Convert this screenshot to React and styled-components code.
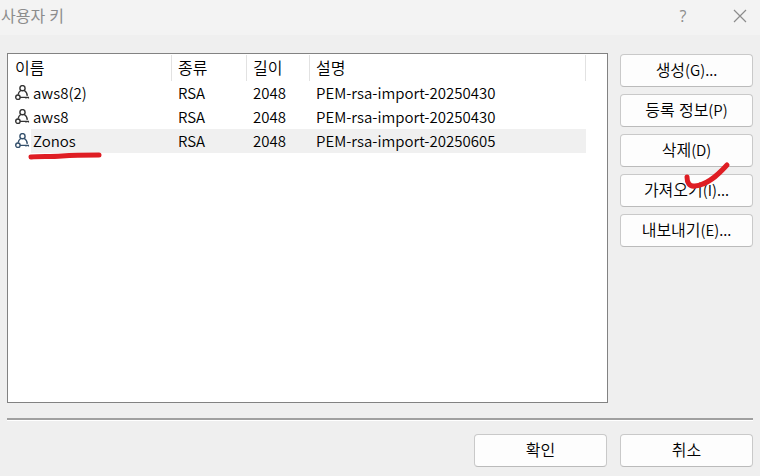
import React, { useState } from 'react'
import styled, { createGlobalStyle, css } from 'styled-components'

const keys = [
  { name: 'aws8(2)', type: 'RSA', length: 2048, description: 'PEM-rsa-import-20250430' },
  { name: 'aws8', type: 'RSA', length: 2048, description: 'PEM-rsa-import-20250430' },
  { name: 'Zonos', type: 'RSA', length: 2048, description: 'PEM-rsa-import-20250605', marked: true },
]

const actions = [
  { label: '생성', hint: '(G)...' },
  { label: '등록 정보', hint: '(P)' },
  { label: '삭제', hint: '(D)' },
  { label: '가져오기', hint: '(I)...', marked: true },
  { label: '내보내기', hint: '(E)...' },
]

const UserKeyIcon = ({ active }) => (
  <KeySvg viewBox="0 0 15 16" $active={active} aria-hidden="true">
    <circle cx="7.5" cy="3.2" r="2.6" />
    <path d="M5.7 5.5C4.2 6.5 3.4 8 3.1 9.6M9.3 5.5c1.9 1.1 2.9 3 3 5.4" />
    <circle cx="2.9" cy="12.2" r="2.2" />
    <path d="M5 12.4H14M11 12.6v1M13.4 12.6v1" />
  </KeySvg>
)

const App = () => {
  const [selected, setSelected] = useState(2)

  return (
    <>
      <GlobalStyle />
      <Dialog>
        <TitleBar>
          <Title>사용자 키</Title>
          <TitleButton aria-label="도움말">?</TitleButton>
          <TitleButton aria-label="닫기">
            <CloseSvg viewBox="0 0 14 14" aria-hidden="true">
              <path d="M1 1l12 12M13 1L1 13" />
            </CloseSvg>
          </TitleButton>
        </TitleBar>
        <Body>
          <ListBox>
            <Table>
              <colgroup>
                <Col $width={164} />
                <Col $width={75} />
                <Col $width={63} />
                <Col $width={276} />
                <col />
              </colgroup>
              <thead>
                <tr>
                  <HeadCell>이름</HeadCell>
                  <HeadCell>종류</HeadCell>
                  <HeadCell>길이</HeadCell>
                  <HeadCell>설명</HeadCell>
                  <td />
                </tr>
              </thead>
              <tbody>
                {keys.map((k, i) => (
                  <Row key={k.name} $selected={i === selected} onClick={() => setSelected(i)}>
                    <NameCell>
                      <Name>
                        <UserKeyIcon active={i === selected} />
                        <span>{k.name}</span>
                      </Name>
                      {k.marked && (
                        <Underline viewBox="0 0 76 10" aria-hidden="true">
                          <path d="M4 6C14 5 22 6 35 5S56 4 72 4" />
                        </Underline>
                      )}
                    </NameCell>
                    <Cell>{k.type}</Cell>
                    <Cell>{k.length}</Cell>
                    <Cell>{k.description}</Cell>
                    <td />
                  </Row>
                ))}
              </tbody>
            </Table>
          </ListBox>
          <Actions>
            {actions.map((a) => (
              <Button key={a.label}>
                {a.label}
                <Hint>{a.hint}</Hint>
                {a.marked && (
                  <Tick viewBox="0 0 48 30" aria-hidden="true">
                    <path d="M4 16C4 21 6 26 12 25C24 24 34 15 44 4" />
                  </Tick>
                )}
              </Button>
            ))}
          </Actions>
        </Body>
        <Footer>
          <Button>확인</Button>
          <Button>취소</Button>
        </Footer>
      </Dialog>
    </>
  )
}

export default App

const GlobalStyle = createGlobalStyle`
  * {
    box-sizing: border-box;
  }

  body {
    margin: 0;
    background: #efefef;
    color: #000;
    font-family: "Open Sans", "Noto Sans CJK KR", sans-serif;
    font-size: 16px;
    font-weight: 350;
  }
`

const Dialog = styled.div`
  display: flex;
  flex-direction: column;
  min-height: 100vh;
`

const TitleBar = styled.header`
  display: flex;
  align-items: center;
  height: 35px;
  padding: 0 6px 4px 1px;
  background: #f3f3f3;
  color: #8c8c8c;
`

const Title = styled.h1`
  flex: 1;
  margin: 0;
  font-size: 16px;
  line-height: 24px;
  font-weight: 400;
`

const TitleButton = styled.button`
  display: flex;
  align-items: center;
  justify-content: center;
  width: 28px;
  height: 28px;
  padding: 0;
  border: none;
  background: none;
  color: inherit;
  font: inherit;
  font-weight: 400;

  & + & {
    margin-left: 29px;
  }
`

const CloseSvg = styled.svg`
  width: 14px;
  height: 14px;
  fill: none;
  stroke: #8c8c8c;
  stroke-width: 1.2;
`

const Body = styled.main`
  display: flex;
  flex: 1;
  gap: 12px;
  padding: 18px 7px 15px;
`

const ListBox = styled.div`
  flex: 1;
  border: 1px solid #828282;
  background: #fff;
`

const Table = styled.table`
  width: 100%;
  table-layout: fixed;
  border-collapse: collapse;

  th,
  td {
    padding: 0;
    text-align: left;
    font-weight: 350;
    white-space: nowrap;
  }
`

const Col = styled.col`
  width: ${({ $width }) => $width}px;
`

const HeadCell = styled.th`
  height: 27px;
  line-height: 24px;
  background: linear-gradient(#e2e2e2, #e2e2e2) right bottom / 1px 26px no-repeat;

  && {
    padding-left: 6px;
  }

  &&:first-child {
    padding-left: 7px;
  }
`

const Cell = styled.td`
  height: 24px;
  font-family: "Noto Sans CJK KR", sans-serif;
  font-size: 15px;
  line-height: 24px;

  && {
    padding-left: 6px;
  }
`

const NameCell = styled(Cell)`
  position: relative;

  && {
    padding-left: 7px;
  }
`

const Row = styled.tr`
  ${({ $selected }) => $selected && css`
    ${Cell} {
      background: #f0f0f0;
    }

    ${NameCell} {
      background: linear-gradient(#f0f0f0, #f0f0f0) 23px 0 no-repeat;
    }
  `}
`

const Name = styled.div`
  display: flex;
  align-items: center;
  gap: 3px;
`

const KeySvg = styled.svg`
  width: 15px;
  height: 16px;
  fill: none;
  stroke: ${({ $active }) => $active ? '#34506c' : '#333'};
  stroke-width: 1.4;
`

const redPen = css`
  position: absolute;
  z-index: 1;
  fill: none;
  stroke: #df1d23;
  stroke-width: 5;
  stroke-linecap: round;
  stroke-linejoin: round;
  pointer-events: none;
`

const Underline = styled.svg`
  ${redPen}
  top: 22px;
  left: 19px;
  width: 76px;
  height: 10px;
`

const Tick = styled.svg`
  ${redPen}
  top: -14px;
  right: 21px;
  width: 48px;
  height: 30px;
`

const Button = styled.button`
  position: relative;
  width: 133px;
  height: 33px;
  padding: 0 0 1px;
  border: 1px solid #c9c9c9;
  border-bottom-color: #bbb;
  border-radius: 4px;
  background: #fdfdfd;
  color: #000;
  font: inherit;
  line-height: 24px;
`

const Hint = styled.span`
  font-family: "Noto Sans CJK KR", sans-serif;
  font-size: 15px;
`

const Actions = styled.div`
  display: flex;
  flex-direction: column;
  gap: 7px;
  padding-top: 1px;
`

const Footer = styled.footer`
  display: flex;
  justify-content: flex-end;
  gap: 13px;
  margin: 0 7px;
  padding: 14px 0 9px;
  border-top: 2px solid #a0a0a0;
  box-shadow: inset 0 1px #fff;
`
